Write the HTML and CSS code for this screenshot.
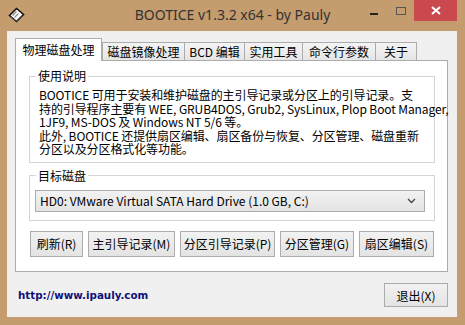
FILE: index.html
```html
<!DOCTYPE html>
<html lang="zh-CN">
<head>
    <meta charset="UTF-8">
    <title>BOOTICE v1.3.2 x64 - by Pauly</title>
    <link rel="stylesheet" href="styles.css">
</head>
<body>
    <div class="window">
        <div class="titlebar">
            <svg class="app-icon" width="17" height="16" viewBox="0 0 17 16">
                <path d="M1.5 8.5 L8.5 1.5 L15.5 7.5 L8.5 14.5 Z" fill="#fff" stroke="#111" stroke-width="1.6"/>
                <path d="M4.5 8.5 L8.5 4.5 M6.5 10.5 L10.5 6.5" stroke="#8a8a8a" stroke-width="1.2"/>
                <path d="M2.5 9.5 L8.5 15 L15 8.5" fill="none" stroke="#555" stroke-width="1"/>
            </svg>
            <div class="title">BOOTICE v1.3.2 x64 - by Pauly</div>
            <div class="controls">
                <div class="ctrl"><span class="min-line"></span></div>
                <div class="ctrl"><span class="max-box"></span></div>
                <div class="ctrl close">
                    <svg width="10" height="9" viewBox="0 0 10 9">
                        <path d="M1 1 L9 8 M9 1 L1 8" stroke="#fff" stroke-width="2"/>
                    </svg>
                </div>
            </div>
        </div>

        <div class="client">
            <!-- tab strip -->
            <div class="tabs">
                <div class="tab active">物理磁盘处理</div>
                <div class="tab first">磁盘镜像处理</div>
                <div class="tab">BCD 编辑</div>
                <div class="tab">实用工具</div>
                <div class="tab">命令行参数</div>
                <div class="tab">关于</div>
            </div>

            <div class="panel">
                <fieldset class="group">
                    <legend>使用说明</legend>
                    <p class="usage">BOOTICE 可用于安装和维护磁盘的主引导记录或分区上的引导记录。支<br>持的引导程序主要有 WEE, GRUB4DOS, Grub2, SysLinux, Plop Boot Manager,<br>1JF9, MS-DOS 及 Windows NT 5/6 等。<br>此外, BOOTICE 还提供扇区编辑、扇区备份与恢复、分区管理、磁盘重新<br>分区以及分区格式化等功能。</p>
                </fieldset>

                <fieldset class="group disk-group">
                    <legend>目标磁盘</legend>
                    <div class="combo">
                        <span>HD0: VMware Virtual SATA Hard Drive (1.0 GB, C:)</span>
                        <svg width="9" height="6" viewBox="0 0 9 6">
                            <path d="M1 1 L4.5 4.5 L8 1" fill="none" stroke="#444" stroke-width="1.3"/>
                        </svg>
                    </div>
                </fieldset>

                <div class="actions">
                    <button class="btn w-refresh">刷新(R)</button>
                    <button class="btn w-mbr">主引导记录(M)</button>
                    <button class="btn w-pbr">分区引导记录(P)</button>
                    <button class="btn w-part">分区管理(G)</button>
                    <button class="btn w-sector">扇区编辑(S)</button>
                </div>
            </div>

            <div class="footer">
                <a class="site-link" href="#">http://www.ipauly.com</a>
                <button class="btn exit">退出(X)</button>
            </div>
        </div>
    </div>
</body>
</html>
```

FILE: styles.css
```css
body {
    margin: 0;
    font-family: "Noto Sans CJK SC", sans-serif;
    font-size: 12px;
    color: #000;
}
.window {
    width: 465px;
    height: 325px;
    background-color: #c49c6d;
    display: flex;
    flex-direction: column;
}

/* Title bar */
.titlebar {
    height: 31px;
    display: grid;
    grid-template-columns: 1fr auto 1fr;
    align-items: start;
}
.app-icon {
    margin: 7px 0 0 8px;
}
.title {
    font-family: "Noto Sans", sans-serif;
    font-size: 14px;
    line-height: 29px;
    color: #333;
}
.controls {
    justify-self: end;
    display: flex;
    margin-right: 8px;
}
.ctrl {
    width: 27px;
    height: 21px;
    display: flex;
    align-items: center;
    justify-content: center;
}
.ctrl.close {
    width: 43px;
    background-color: #c9494e;
}
.min-line {
    width: 8px;
    height: 2px;
    margin-top: 6px;
    background-color: #222;
}
.max-box {
    width: 8px;
    height: 6px;
    border: 1px solid #555;
}

/* Client area */
.client {
    flex: 1;
    margin: 0 8px 8px 7px;
    padding: 7px 9px 0 8px;
    background-color: #f0f0f0;
}
.tabs {
    display: flex;
    align-items: flex-end;
    height: 22px;
}
.tab {
    box-sizing: border-box;
    height: 18px;
    margin-left: -1px;
    border: 1px solid #acacac;
    border-bottom: none;
    background: linear-gradient(#f4f4f4, #e5e5e5);
    line-height: 17px;
    text-align: center;
    white-space: nowrap;
}
.tab.first { margin-left: 0; width: 83px; }
.tab:nth-child(3) { width: 61px; }
.tab:nth-child(4) { width: 59px; }
.tab:nth-child(5) { width: 74px; }
.tab:nth-child(6) { width: 42px; }
.tab.active {
    position: relative;
    z-index: 1;
    width: 87px;
    height: 23px;
    margin: 0 0 -1px 0;
    background: #fff;
    line-height: 22px;
}

.panel {
    box-sizing: border-box;
    height: 212px;
    padding: 8px 12px 0 13px;
    border: 1px solid #acacac;
    background-color: #fff;
}

/* Group boxes */
.group {
    margin: 0;
    min-width: 0;
    padding: 5px 9px 6px;
    border: 1px solid #d5d5d5;
}
.group legend {
    padding: 0 2px;
    margin-left: -3px;
    line-height: 14px;
}
.usage {
    margin: 0;
    line-height: 13.5px;
    letter-spacing: -0.1px;
    white-space: nowrap;
}
.disk-group {
    margin-top: 6px;
    padding: 7px 9px 8px;
}
.combo {
    box-sizing: border-box;
    height: 22px;
    margin-left: -4px;
    padding: 0 8px 0 4px;
    border: 1px solid #acacac;
    background: linear-gradient(#f2f2f2, #e4e4e4);
    display: flex;
    align-items: center;
    justify-content: space-between;
    white-space: nowrap;
}

/* Buttons */
.actions {
    display: flex;
    gap: 5px;
    margin: 10px 0 0 1px;
}
.btn {
    box-sizing: border-box;
    height: 26px;
    padding: 0;
    border: 1px solid #acacac;
    background: linear-gradient(#f2f2f2, #e3e3e3);
    font-family: inherit;
    font-size: 12px;
    color: #000;
}
.w-refresh { width: 53px; }
.w-mbr { width: 87px; }
.w-pbr { width: 95px; }
.w-part { width: 74px; }
.w-sector { width: 75px; }

.footer {
    display: flex;
    justify-content: space-between;
    align-items: center;
    margin-top: 11px;
}
.site-link {
    padding-left: 3px;
    font-family: "DejaVu Sans", sans-serif;
    font-size: 10.3px;
    font-weight: bold;
    color: #10107a;
    text-decoration: none;
}
.btn.exit {
    width: 64px;
    height: 24px;
}
```
